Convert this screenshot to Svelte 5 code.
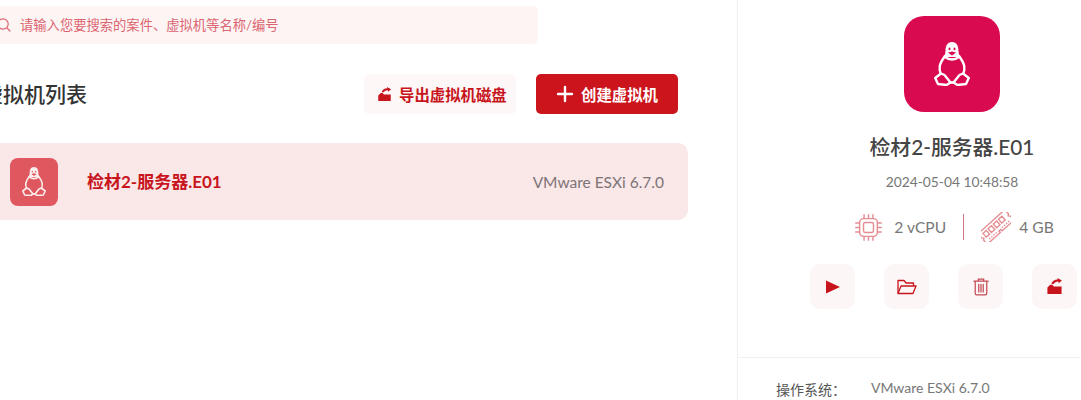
<script>
  const vm = { name: '检材2-服务器.E01', os: 'VMware ESXi 6.7.0', created: '2024-05-04 10:48:58', cpu: '2 vCPU', mem: '4 GB' };
</script>

{#snippet tux(size)}
  <svg class="tux" width={size} height={size * 44 / 36} viewBox="0 0 36 44" fill="none" stroke="currentColor" stroke-width="2.4" stroke-linejoin="round" stroke-linecap="round">
    <path fill="currentColor" stroke="none" fill-rule="evenodd" d="M18 0C13 0 11.5 4.5 11.5 9C11.5 11 11 13 10 15H26C25 13 24.5 11 24.5 9C24.5 4.5 23 0 18 0ZM15.5 5.5A1 1.4 0 1 0 15.5 8.3A1 1.4 0 1 0 15.5 5.5ZM20.5 5.5A1 1.4 0 1 0 20.5 8.3A1 1.4 0 1 0 20.5 5.5ZM14 10.5L18 9.5L22 10.5L18 13.5Z" />
    <path d="M11 14C9 17 6.5 20 5.8 24C5.4 26.5 5.6 29 6.5 31" />
    <path d="M25 14C27 17 29.5 20 30.2 24C30.6 26.5 30.4 29 29.5 31" />
    <path d="M11 15Q18 20 25 15" />
    <path d="M1.2 36L7 31.5L10.5 33L16.5 40.5L12.5 43L4 42Z" />
    <path d="M34.8 36L29 31.5L25.5 33L19.5 40.5L23.5 43L32 42Z" />
    <path d="M16.5 40.5H19.5" />
  </svg>
{/snippet}

{#snippet exportIcon(size)}
  <svg width={size} height={size} viewBox="0 0 24 24" fill="currentColor">
    <path d="M2 22.5V13.5L6 9.5H9L11 12H22V22.5Z" />
    <path d="M7.5 8.5C8.5 4.5 12 2 16.5 2L16 0L22.5 3.5L18 7.5L17.4 5C14 5 12 6.2 10.8 8.5Z" />
  </svg>
{/snippet}

<div class="page">
  <main class="list">
    <div class="search">
      <svg width="14" height="14" viewBox="0 0 14 14" fill="none" stroke="currentColor" stroke-width="1.2" stroke-linecap="round">
        <circle cx="6" cy="6" r="5.2" />
        <path d="M10 10L13 13" />
      </svg>
      <input type="text" placeholder="请输入您要搜索的案件、虚拟机等名称/编号" />
    </div>

    <div class="head">
      <h2>虚拟机列表</h2>
      <div class="actions">
        <button class="btn ghost">{@render exportIcon(15)}导出虚拟机磁盘</button>
        <button class="btn primary">
          <svg width="18" height="18" viewBox="0 0 18 18" stroke="currentColor" stroke-width="2.4" stroke-linecap="round">
            <path d="M9 2V16M2 9H16" />
          </svg>
          创建虚拟机
        </button>
      </div>
    </div>

    <div class="vm-row">
      <div class="vm-icon">{@render tux(24)}</div>
      <span class="vm-name">{vm.name}</span>
      <span class="vm-os">{vm.os}</span>
    </div>
  </main>

  <aside class="detail">
    <div class="summary">
      <div class="logo">{@render tux(36)}</div>
      <h3>{vm.name}</h3>
      <div class="date">{vm.created}</div>
      <div class="specs">
        <svg class="spec-icon" width="31" height="31" viewBox="0 0 28 28" fill="none" stroke="currentColor" stroke-width="1.3">
          <rect x="6" y="6" width="16" height="16" rx="3.5" />
          <rect x="9.5" y="9.5" width="9" height="9" rx="1.5" />
          <path d="M10 6V2M14 6V2M18 6V2M10 26V22M14 26V22M18 26V22M6 10H2M6 14H2M6 18H2M26 10H22M26 14H22M26 18H22" />
        </svg>
        <span>{vm.cpu}</span>
        <i class="sep"></i>
        <svg class="spec-icon ram" width="30" height="30" viewBox="0 0 30 30" fill="none" stroke="currentColor" stroke-width="1.4">
          <g transform="rotate(-42 15 15)">
            <path d="M-3 8H33V13.5L31.5 15L33 16.5V22H17V20H14.5V22H-3V16.5L-1.5 15L-3 13.5Z" />
            <path d="M1 11H5.5V16H1ZM8 11H12.5V16H8ZM15 11H19.5V16H15ZM22 11H26.5V16H22Z" />
            <path d="M2 19.5H12M19 19.5H30" stroke-dasharray="1.4 1.4" />
          </g>
        </svg>
        <span>{vm.mem}</span>
      </div>
    </div>

    <div class="tools">
      <button class="tool">
        <svg width="14" height="14" viewBox="0 0 14 14" fill="currentColor"><path d="M0 0.5L14 7L0 13.5Z" /></svg>
      </button>
      <button class="tool">
        <svg width="20" height="16" viewBox="0 0 20 16" fill="none" stroke="currentColor" stroke-width="1.3" stroke-linejoin="round">
          <path d="M1 14.5V1.5H7L9 4H16.5V7" />
          <path d="M1 14.5L4 7H19L16 14.5Z" />
        </svg>
      </button>
      <button class="tool muted">
        <svg width="16" height="18" viewBox="0 0 18 20" fill="none" stroke="currentColor" stroke-width="1.4" stroke-linecap="round">
          <path d="M1 3.5H17M6 3.5V1.2H12V3.5M2.5 3.5V17C2.5 18 3.2 18.8 4.2 18.8H13.8C14.8 18.8 15.5 18 15.5 17V3.5M6.5 7V15.5M9 7V15.5M11.5 7V15.5" />
        </svg>
      </button>
      <button class="tool">{@render exportIcon(17)}</button>
    </div>

    <div class="info">
      <div class="info-row">
        <span class="label">操作系统：</span>
        <span class="value">{vm.os}</span>
      </div>
    </div>
  </aside>
</div>

<style>
  :global(body) {
    margin: 0;
    background: #fff;
    font-family: "Lato", "Noto Sans CJK SC", sans-serif;
  }
  .page {
    display: flex;
    width: 1081px;
    height: 400px;
    overflow: hidden;
  }
  .list {
    flex: none;
    width: 718px;
    margin-left: -30px;
    padding: 6px 49px 0 0;
    box-sizing: content-box;
  }
  .search {
    display: flex;
    align-items: center;
    gap: 9px;
    width: 568px;
    height: 38px;
    padding-left: 27px;
    box-sizing: border-box;
    background: #fdf4f4;
    border-radius: 5px;
    color: #dc6470;
  }
  .search input {
    flex: 1;
    border: 0;
    outline: 0;
    background: transparent;
    font: inherit;
    font-size: 13.3px;
    padding: 0;
  }
  .search input::placeholder {
    color: #dc6470;
    opacity: 1;
  }
  .head {
    display: flex;
    align-items: center;
    justify-content: space-between;
    padding-right: 10px;
    margin-top: 30px;
  }
  h2 {
    margin: -2px 0 0 12px;
    font-size: 21px;
    font-weight: 500;
    color: #333;
  }
  .actions {
    display: flex;
    gap: 20px;
  }
  .btn {
    display: flex;
    align-items: center;
    height: 40px;
    border: 0;
    border-radius: 5px;
    font: inherit;
    font-size: 15.4px;
    font-weight: 700;
    cursor: pointer;
  }
  .ghost {
    gap: 7px;
    width: 152px;
    padding: 0 0 0 13px;
    background: #fdf7f7;
    color: #c8151d;
  }
  .primary {
    gap: 7px;
    width: 142px;
    padding: 0 0 0 20px;
    background: #cc141c;
    color: #fff;
  }
  .vm-row {
    display: flex;
    align-items: center;
    height: 77px;
    margin-top: 29px;
    padding: 0 24px 0 40px;
    background: #fae7e8;
    border-radius: 10px;
  }
  .vm-icon {
    display: flex;
    align-items: center;
    justify-content: center;
    width: 48px;
    height: 48px;
    border-radius: 8px;
    background: #e0585f;
    color: #fdeeee;
  }
  .vm-name {
    margin-left: 29px;
    margin-top: -2px;
    font-size: 17px;
    font-weight: 700;
    color: #c8151d;
  }
  .vm-os {
    margin-left: auto;
    font-size: 15.5px;
    color: #7d7476;
  }
  .detail {
    flex: none;
    width: 429px;
    border-left: 1px solid #f1f1f1;
    box-sizing: border-box;
  }
  .summary {
    display: flex;
    flex-direction: column;
    align-items: center;
    padding-top: 16px;
  }
  .logo {
    display: flex;
    align-items: center;
    justify-content: center;
    width: 96px;
    height: 96px;
    border-radius: 20px;
    background: #da0a50;
    color: #fff;
  }
  h3 {
    margin: 20px 0 0;
    font-size: 20.8px;
    line-height: 30px;
    font-weight: 500;
    color: #444;
  }
  .date {
    margin-top: 11px;
    font-size: 13.8px;
    color: #777;
  }
  .specs {
    display: flex;
    align-items: center;
    margin: 21px 0 0 3px;
    font-size: 15.6px;
    color: #777;
    height: 32px;
  }
  .spec-icon {
    color: #e58d93;
  }
  .specs span {
    margin-left: 10px;
  }
  .sep {
    width: 1px;
    height: 26px;
    margin: 0 17px;
    background: #d2747c;
  }
  .specs .ram {
    margin-right: -2px;
  }
  .tools {
    display: flex;
    gap: 29px;
    margin: 21px 0 0 72px;
  }
  .tool {
    display: flex;
    align-items: center;
    justify-content: center;
    flex: none;
    width: 45px;
    height: 45px;
    padding: 0;
    border: 0;
    border-radius: 10px;
    background: #fdf6f6;
    color: #c8151d;
    cursor: pointer;
  }
  .tool.muted {
    color: #c44a55;
  }
  .info {
    margin-top: 48px;
    padding: 21px 0 0 38px;
    border-top: 1px solid #f1f1f1;
  }
  .info-row {
    display: flex;
    font-size: 14px;
    color: #555;
  }
  .label {
    width: 95px;
  }
  .value {
    color: #777;
  }
</style>
